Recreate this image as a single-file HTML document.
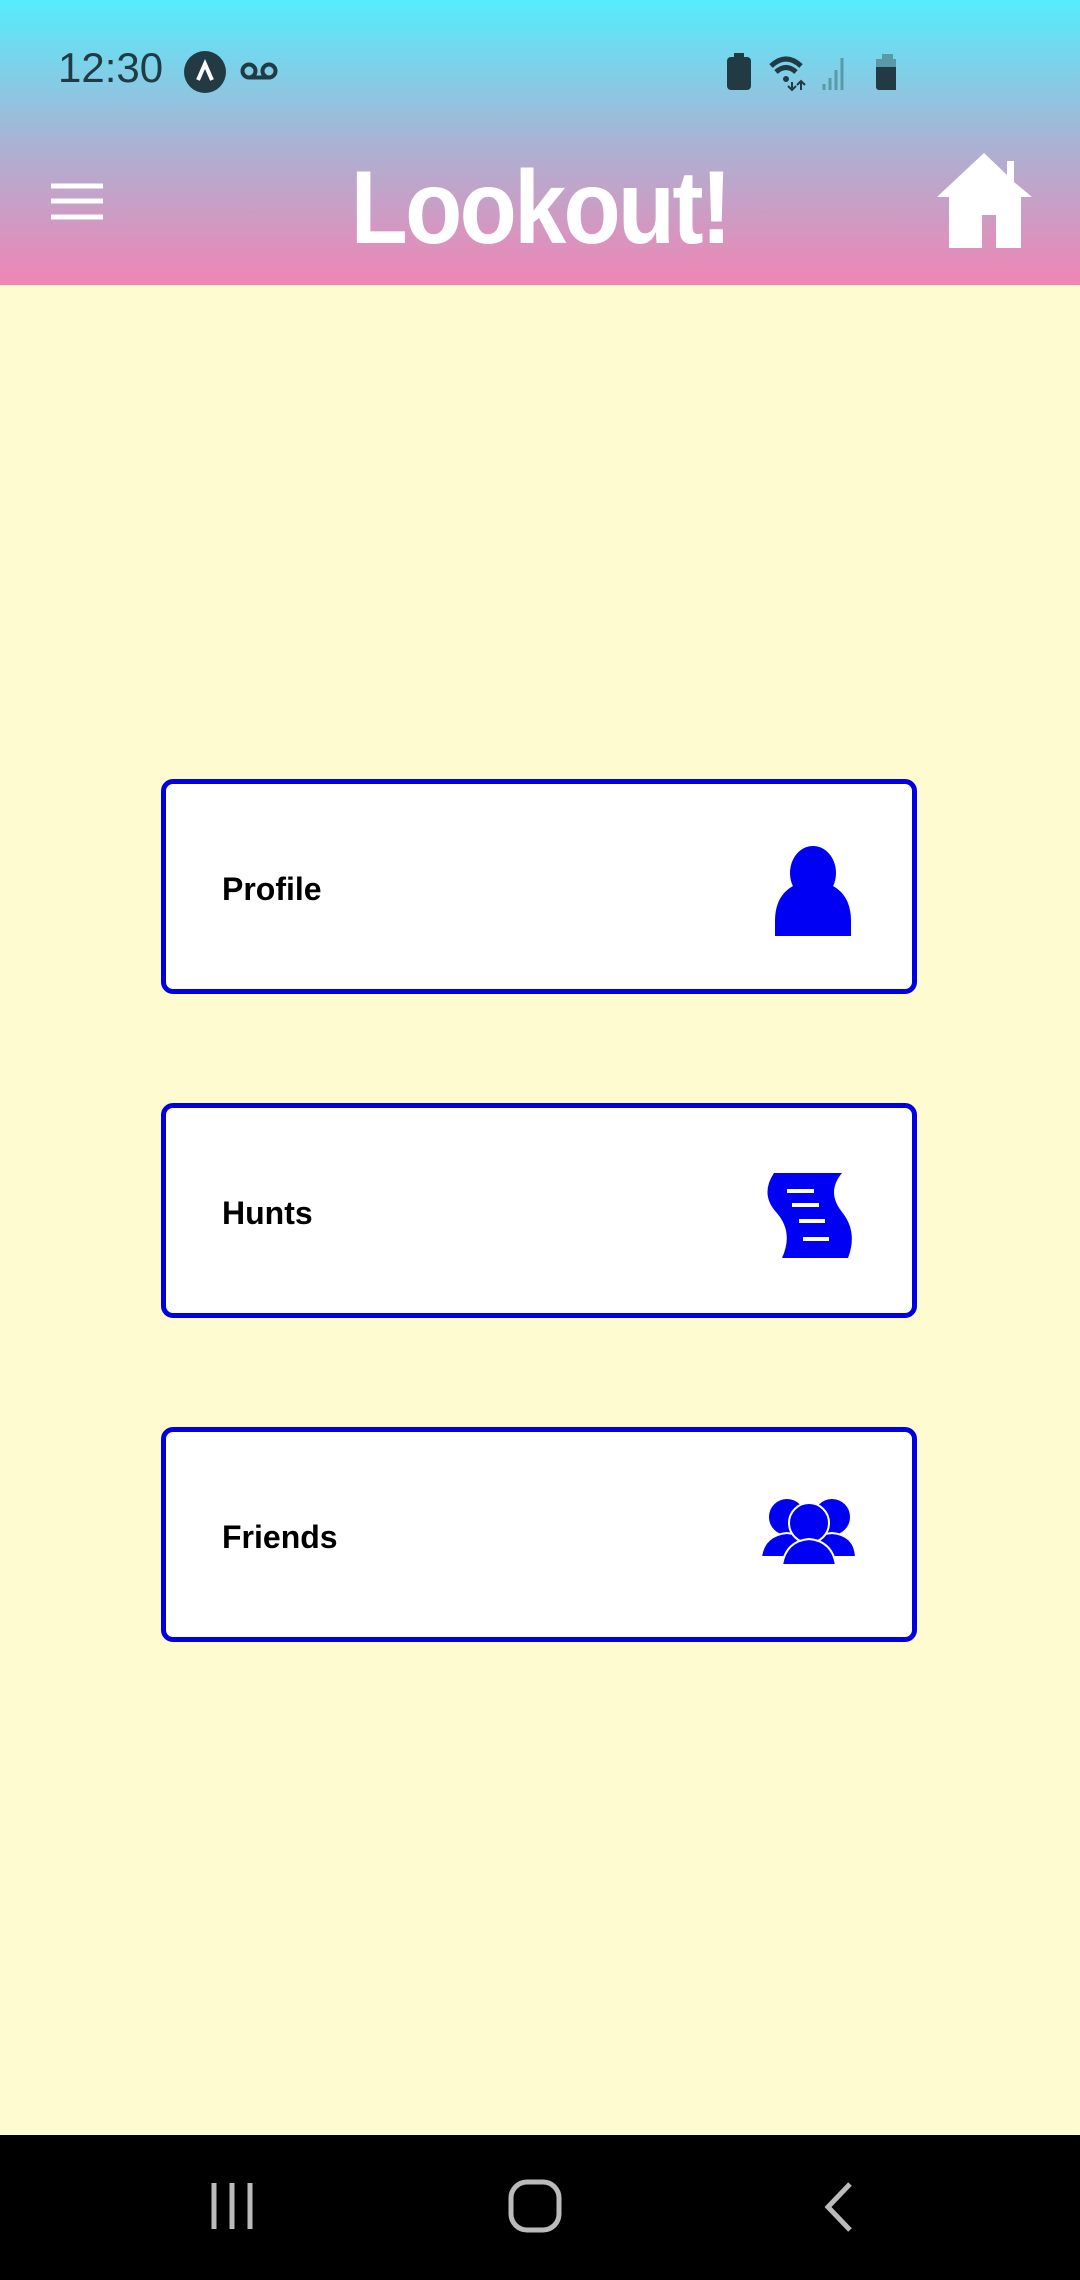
<!DOCTYPE html>
<html><head><meta charset="utf-8"><style>
html,body{margin:0;padding:0;width:1080px;height:2280px;overflow:hidden;background:#fffbd1;font-family:"Liberation Sans",sans-serif}
.hdr{position:absolute;left:0;top:0;width:1080px;height:285px;background:linear-gradient(#55ecfc,#a9b3d4 50%,#f085b4)}
.time{position:absolute;left:58px;top:44px;font-size:42px;color:#213a44}
.title{position:absolute;left:0;width:1080px;top:150px;text-align:center;font-size:104px;font-weight:bold;color:#fff;line-height:116px;letter-spacing:-3px;transform:scaleX(0.9);transform-origin:540px 0}
.card{position:absolute;left:161px;width:746px;height:205px;border:5px solid #0000e0;border-radius:12px;background:#fff}
.card span{position:absolute;left:56px;top:87px;font-size:32px;font-weight:bold;color:#000}
.card svg{position:absolute}
.nav{position:absolute;left:0;top:2135px;width:1080px;height:145px;background:#000}
</style></head><body>
<div class="hdr">
<div class="time">12:30</div>
<svg style="position:absolute;left:184px;top:51px" width="42" height="42"><circle cx="21" cy="21" r="21" fill="#213a44"/><path d="M14 29 L21 13 L28 29" stroke="#fff" stroke-width="4" fill="none"/></svg>
<svg style="position:absolute;left:240px;top:60px" width="38" height="22"><circle cx="9" cy="11" r="6.5" stroke="#213a44" stroke-width="4" fill="none"/><circle cx="29" cy="11" r="6.5" stroke="#213a44" stroke-width="4" fill="none"/><path d="M9 17.5H29" stroke="#213a44" stroke-width="4"/></svg>
<svg style="position:absolute;left:726px;top:52px" width="170" height="40">
<rect x="1" y="5" width="24" height="33" rx="4" fill="#213a44"/><rect x="8" y="1" width="10" height="5" fill="#213a44"/>
<path d="M45 14 Q60 0 75 14 M50 20 Q60 11 70 20" stroke="#213a44" stroke-width="5" fill="none"/><circle cx="60" cy="27" r="3" fill="#213a44"/><path d="M66 30v8M62 34l4 4 4-4M75 38v-8M71 33l4-4 4 4" stroke="#213a44" stroke-width="2" fill="none"/>
<path d="M98 38V32M104 38V26M110 38V18M116 38V6" stroke="#5a9aa8" stroke-width="3"/>
<rect x="150" y="7" width="23" height="31" rx="3" fill="#213a44"/><rect x="156" y="2" width="11" height="6" fill="#5a9aa8"/><rect x="150" y="7" width="23" height="8" fill="#5a9aa8"/>
</svg>
<svg style="position:absolute;left:51px;top:183px" width="54" height="38"><path d="M0 3H52M0 18H52M0 34H52" stroke="#fff" stroke-width="5"/></svg>
<div class="title">Lookout!</div>
<svg style="position:absolute;left:937px;top:153px" width="98" height="97"><path d="M0 44 L47 0 L70 22 V8 H77 V29 L95 44 H84 V95 H59 V62 H45 V95 H12 V44Z" fill="#fff"/></svg>
</div>
<div class="card" style="top:779px"><span>Profile</span>
<svg style="left:607px;top:62px" width="80" height="90"><ellipse cx="40" cy="27" rx="23" ry="27" fill="#0000f5"/><path d="M2 90 V75 Q2 50 20 40 Q40 58 60 40 Q78 50 78 75 V90Z" fill="#0000f5"/></svg></div>
<div class="card" style="top:1103px"><span>Hunts</span>
<svg style="left:596px;top:64px" width="95" height="90"><path d="M12 1 H80 Q64 20 80 40 Q96 60 86 86 H20 Q32 60 14 40 Q-2 22 12 1Z" fill="#0000f5"/><path d="M25 19H52M30 33H57M37 49H63M41 67H67" stroke="#fff" stroke-width="4"/></svg></div>
<div class="card" style="top:1427px"><span>Friends</span>
<svg style="left:594px;top:65px" width="98" height="70"><g fill="#0000f5" stroke="#fff" stroke-width="2"><circle cx="27" cy="20" r="19"/><circle cx="72" cy="20" r="19"/><path d="M1 60 Q4 38 27 36 Q50 38 53 60Z"/><path d="M45 60 Q48 38 72 36 Q95 38 96 60Z"/><circle cx="49" cy="26" r="20"/><path d="M22 68 Q26 44 49 42 Q72 44 76 68Z"/></g></svg></div>
<div class="nav">
<svg style="position:absolute;left:208px;top:46px" width="50" height="50"><path d="M6 2V48M24 2V48M42 2V48" stroke="#bbb" stroke-width="5"/></svg>
<svg style="position:absolute;left:508px;top:44px" width="54" height="54"><rect x="3" y="3" width="48" height="48" rx="16" stroke="#bbb" stroke-width="5" fill="none"/></svg>
<svg style="position:absolute;left:820px;top:46px" width="36" height="52"><path d="M30 3 L8 26 L30 49" stroke="#bbb" stroke-width="5" fill="none"/></svg>
</div>
</body></html>
